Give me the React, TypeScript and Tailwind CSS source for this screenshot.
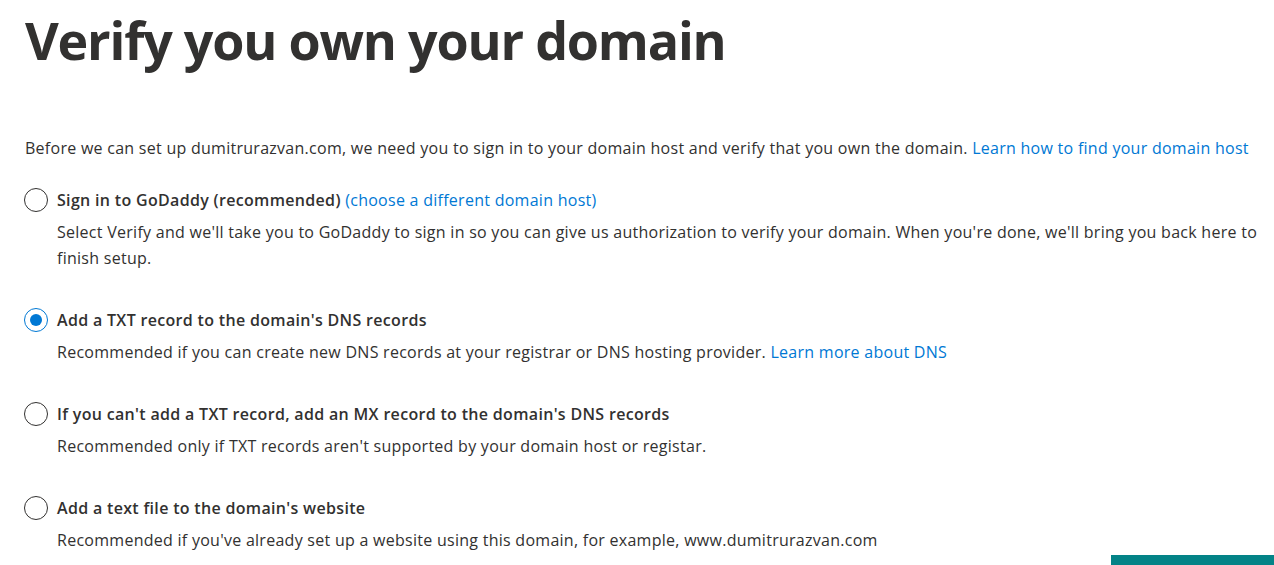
import React from "react";

const options = [
  {
    label: "Sign in to GoDaddy (recommended)",
    extra: "(choose a different domain host)",
    desc: "Select Verify and we'll take you to GoDaddy to sign in so you can give us authorization to verify your domain. When you're done, we'll bring you back here to finish setup.",
    checked: false,
  },
  {
    label: "Add a TXT record to the domain's DNS records",
    desc: "Recommended if you can create new DNS records at your registrar or DNS hosting provider.",
    link: "Learn more about DNS",
    checked: true,
  },
  {
    label: "If you can't add a TXT record, add an MX record to the domain's DNS records",
    desc: "Recommended only if TXT records aren't supported by your domain host or registar.",
    checked: false,
  },
  {
    label: "Add a text file to the domain's website",
    desc: "Recommended if you've already set up a website using this domain, for example, www.dumitrurazvan.com",
    checked: false,
  },
];

function Radio({ checked }: { checked: boolean }) {
  return checked ? (
    <span className="flex h-[24px] w-[24px] shrink-0 items-center justify-center rounded-full border border-[#0078d4] bg-white">
      <span className="h-[12px] w-[12px] rounded-full bg-[#0078d4]" />
    </span>
  ) : (
    <span className="h-[24px] w-[24px] shrink-0 rounded-full border border-[#323130] bg-white" />
  );
}

export default function App() {
  return (
    <div
      className="relative h-[565px] w-[1274px] overflow-hidden bg-white text-[#323130]"
      style={{ fontFamily: '"Segoe UI", "Open Sans", "Noto Sans", sans-serif' }}
    >
      <div className="pl-[25px] pr-[4px] pt-[8px]">
        <h1 className="text-[52px] font-bold leading-[64px] tracking-[-1.2px]">Verify you own your domain</h1>
        <p className="mt-[63px] text-[16px] leading-[26px] tracking-[0.27px]">
          Before we can set up dumitrurazvan.com, we need you to sign in to your domain host and verify that you own the domain.{" "}
          <span className="text-[#0078d4]">Learn how to find your domain host</span>
        </p>
        <div className="mt-[27px] flex flex-col gap-[37px]">
          {options.map((o, i) => (
            <div key={i} className="flex flex-col">
              <div className="ml-[-1px] flex h-[24px] items-center gap-[9px]">
                <Radio checked={o.checked} />
                <span className="text-[16px] font-semibold leading-[24px] tracking-[0.32px]">
                  {o.label}
                  {o.extra && <span className="font-normal tracking-[0.27px] text-[#0078d4]"> {o.extra}</span>}
                </span>
              </div>
              <p className="mt-[7px] pl-[32px] text-[16px] leading-[26px] tracking-[0.27px]">
                {o.desc}
                {o.link && <span className="text-[#0078d4]"> {o.link}</span>}
              </p>
            </div>
          ))}
        </div>
      </div>
      <div className="absolute bottom-0 right-0 h-[10px] w-[163px] bg-[#038387]" />
    </div>
  );
}
